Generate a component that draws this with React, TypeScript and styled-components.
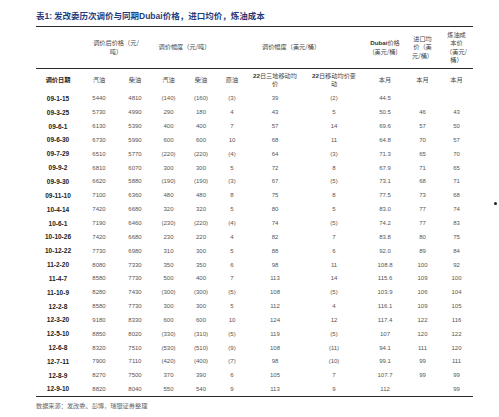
import React from "react";
import styled, { createGlobalStyle } from "styled-components";

const Global = createGlobalStyle`
  html, body { margin: 0; padding: 0; background: #ffffff; }
  body { width: 499px; height: 417px; overflow: hidden; }
`;

const Page = styled.div`
  position: relative;
  width: 499px;
  height: 417px;
  padding: 10px 0 0 36px;
  box-sizing: border-box;
  font-family: "Liberation Sans", "Noto Sans CJK SC", sans-serif;
`;

const Title = styled.div`
  font-family: "Noto Sans CJK SC", sans-serif;
  font-size: 8.5px;
  line-height: 10px;
  font-weight: 700;
  color: #1f3c7c;
  height: 10px;
  white-space: nowrap;
  b { font-family: "Liberation Sans", sans-serif; }
`;

const Table = styled.table`
  margin-top: 6px;
  width: 437px;
  border-collapse: collapse;
  table-layout: fixed;
`;

const GroupRow = styled.tr`
  height: 42px;
  border-top: 1.5px solid #2b2b2b;
  border-bottom: 1.5px solid #2b2b2b;
`;

const SubRow = styled.tr`
  height: 23px;
`;

const DataRow = styled.tr<{ $last?: boolean }>`
  height: 13.85px;
  border-bottom: ${(p) => (p.$last ? "1.5px solid #2b2b2b" : "none")};
`;

const HeadCell = styled.th<{ $bold?: boolean }>`
  padding: 0 1px;
  font-family: "Noto Sans CJK SC", sans-serif;
  font-size: 6.2px;
  line-height: 8.5px;
  font-weight: ${(p) => (p.$bold ? 700 : 400)};
  color: ${(p) => (p.$bold ? "#222" : "#444")};
  text-align: center;
  vertical-align: middle;
  b { font-family: "Liberation Sans", sans-serif; font-weight: 700; color: #333; }
`;

const DateCell = styled.td`
  padding: 0;
  font-family: "Liberation Sans Narrow", "Arial Narrow", "Liberation Sans", sans-serif;
  font-size: 6.5px;
  font-weight: 700;
  color: #222;
  text-align: center;
  vertical-align: middle;
  white-space: nowrap;
`;

const NumCell = styled.td`
  padding: 0;
  font-family: "Liberation Sans Narrow", "Arial Narrow", "Liberation Sans", sans-serif;
  font-size: 6px;
  color: #555;
  text-align: center;
  vertical-align: middle;
  white-space: nowrap;
`;

const Source = styled.div`
  margin-top: 5px;
  font-family: "Noto Sans CJK SC", serif;
  font-size: 6.2px;
  line-height: 8px;
  color: #666;
  white-space: nowrap;
`;

const Bullet = styled.div`
  position: absolute;
  left: 494px;
  top: 202px;
  width: 3px;
  height: 3px;
  border-radius: 50%;
  background: #222;
`;

const widths = [44, 38, 34, 33, 32, 30, 56, 62, 40, 35, 33];

const rows: string[][] = [
  ["09-1-15", "5440", "4810", "(140)", "(160)", "(3)", "39", "(2)", "44.5", "", ""],
  ["09-3-25", "5730", "4990", "290", "180", "4", "43", "5", "50.5", "46", "43"],
  ["09-6-1", "6130", "5390", "400", "400", "7", "57", "14", "69.6", "57", "50"],
  ["09-6-30", "6730", "5990", "600", "600", "10", "68", "11", "64.8", "70", "57"],
  ["09-7-29", "6510", "5770", "(220)", "(220)", "(4)", "64", "(3)", "71.3", "65", "70"],
  ["09-9-2", "6810", "6070", "300", "300", "5", "72", "8", "67.9", "71", "65"],
  ["09-9-30", "6620", "5880", "(190)", "(190)", "(3)", "67", "(5)", "73.1", "68", "71"],
  ["09-11-10", "7100", "6360", "480", "480", "8", "75", "8", "77.5", "73", "68"],
  ["10-4-14", "7420", "6680", "320", "320", "5", "80", "5", "83.0", "77", "74"],
  ["10-6-1", "7190", "6460", "(230)", "(220)", "(4)", "74", "(5)", "74.2", "77", "83"],
  ["10-10-26", "7420", "6680", "230", "220", "4", "82", "7", "83.8", "80", "75"],
  ["10-12-22", "7730", "6980", "310", "300", "5", "88", "6", "92.0", "89", "84"],
  ["11-2-20", "8080", "7330", "350", "350", "6", "98", "11", "108.8", "100", "92"],
  ["11-4-7", "8580", "7730", "500", "400", "7", "113", "14", "115.6", "109", "100"],
  ["11-10-9", "8280", "7430", "(300)", "(300)", "(5)", "108", "(5)", "103.9", "106", "104"],
  ["12-2-8", "8580", "7730", "300", "300", "5", "112", "4", "116.1", "109", "105"],
  ["12-3-20", "9180", "8330", "600", "600", "10", "124", "12", "117.4", "122", "116"],
  ["12-5-10", "8850", "8020", "(330)", "(310)", "(5)", "119", "(5)", "107", "120", "122"],
  ["12-6-8", "8320", "7510", "(530)", "(510)", "(9)", "108", "(11)", "94.1", "111", "120"],
  ["12-7-11", "7900", "7110", "(420)", "(400)", "(7)", "98", "(10)", "99.1", "99", "111"],
  ["12-8-9", "8270", "7500", "370", "390", "6", "105", "7", "107.7", "99", "99"],
  ["12-9-10", "8820", "8040", "550", "540", "9", "113", "9", "112", "", "99"],
];

export default function App() {
  return (
    <>
      <Global />
      <Page>
        <Title>
          表<b>1:</b> 发改委历次调价与同期<b>Dubai</b>价格，进口均价，炼油成本
        </Title>
        <Table>
          <colgroup>
            {widths.map((w, i) => (
              <col key={i} style={{ width: w }} />
            ))}
          </colgroup>
          <thead>
            <GroupRow>
              <HeadCell />
              <HeadCell colSpan={2}>
                调价后价格（元/
                <br />
                吨）
              </HeadCell>
              <HeadCell colSpan={2}>调价幅度（元/吨）</HeadCell>
              <HeadCell colSpan={3}>调价幅度（美元/桶）</HeadCell>
              <HeadCell>
                <b>Dubai</b>价格
                <br />
                (美元/桶)
              </HeadCell>
              <HeadCell>
                进口均
                <br />
                价（美
                <br />
                元/桶）
              </HeadCell>
              <HeadCell>
                炼油成
                <br />
                本价
                <br />
                （美元/
                <br />
                桶）
              </HeadCell>
            </GroupRow>
            <SubRow>
              <HeadCell $bold>调价日期</HeadCell>
              <HeadCell>汽油</HeadCell>
              <HeadCell>柴油</HeadCell>
              <HeadCell>汽油</HeadCell>
              <HeadCell>柴油</HeadCell>
              <HeadCell>原油</HeadCell>
              <HeadCell>
                <b>22</b>日三地移动均
                <br />
                价
              </HeadCell>
              <HeadCell>
                <b>22</b>日移动均价变
                <br />
                动
              </HeadCell>
              <HeadCell>本月</HeadCell>
              <HeadCell>本月</HeadCell>
              <HeadCell>本月</HeadCell>
            </SubRow>
          </thead>
          <tbody>
            {rows.map((r, i) => (
              <DataRow key={r[0]} $last={i === rows.length - 1}>
                <DateCell>{r[0]}</DateCell>
                {r.slice(1).map((v, j) => (
                  <NumCell key={j}>{v}</NumCell>
                ))}
              </DataRow>
            ))}
          </tbody>
        </Table>
        <Source>数据来源：发改委、彭博，瑞银证券整理</Source>
        <Bullet />
      </Page>
    </>
  );
}
